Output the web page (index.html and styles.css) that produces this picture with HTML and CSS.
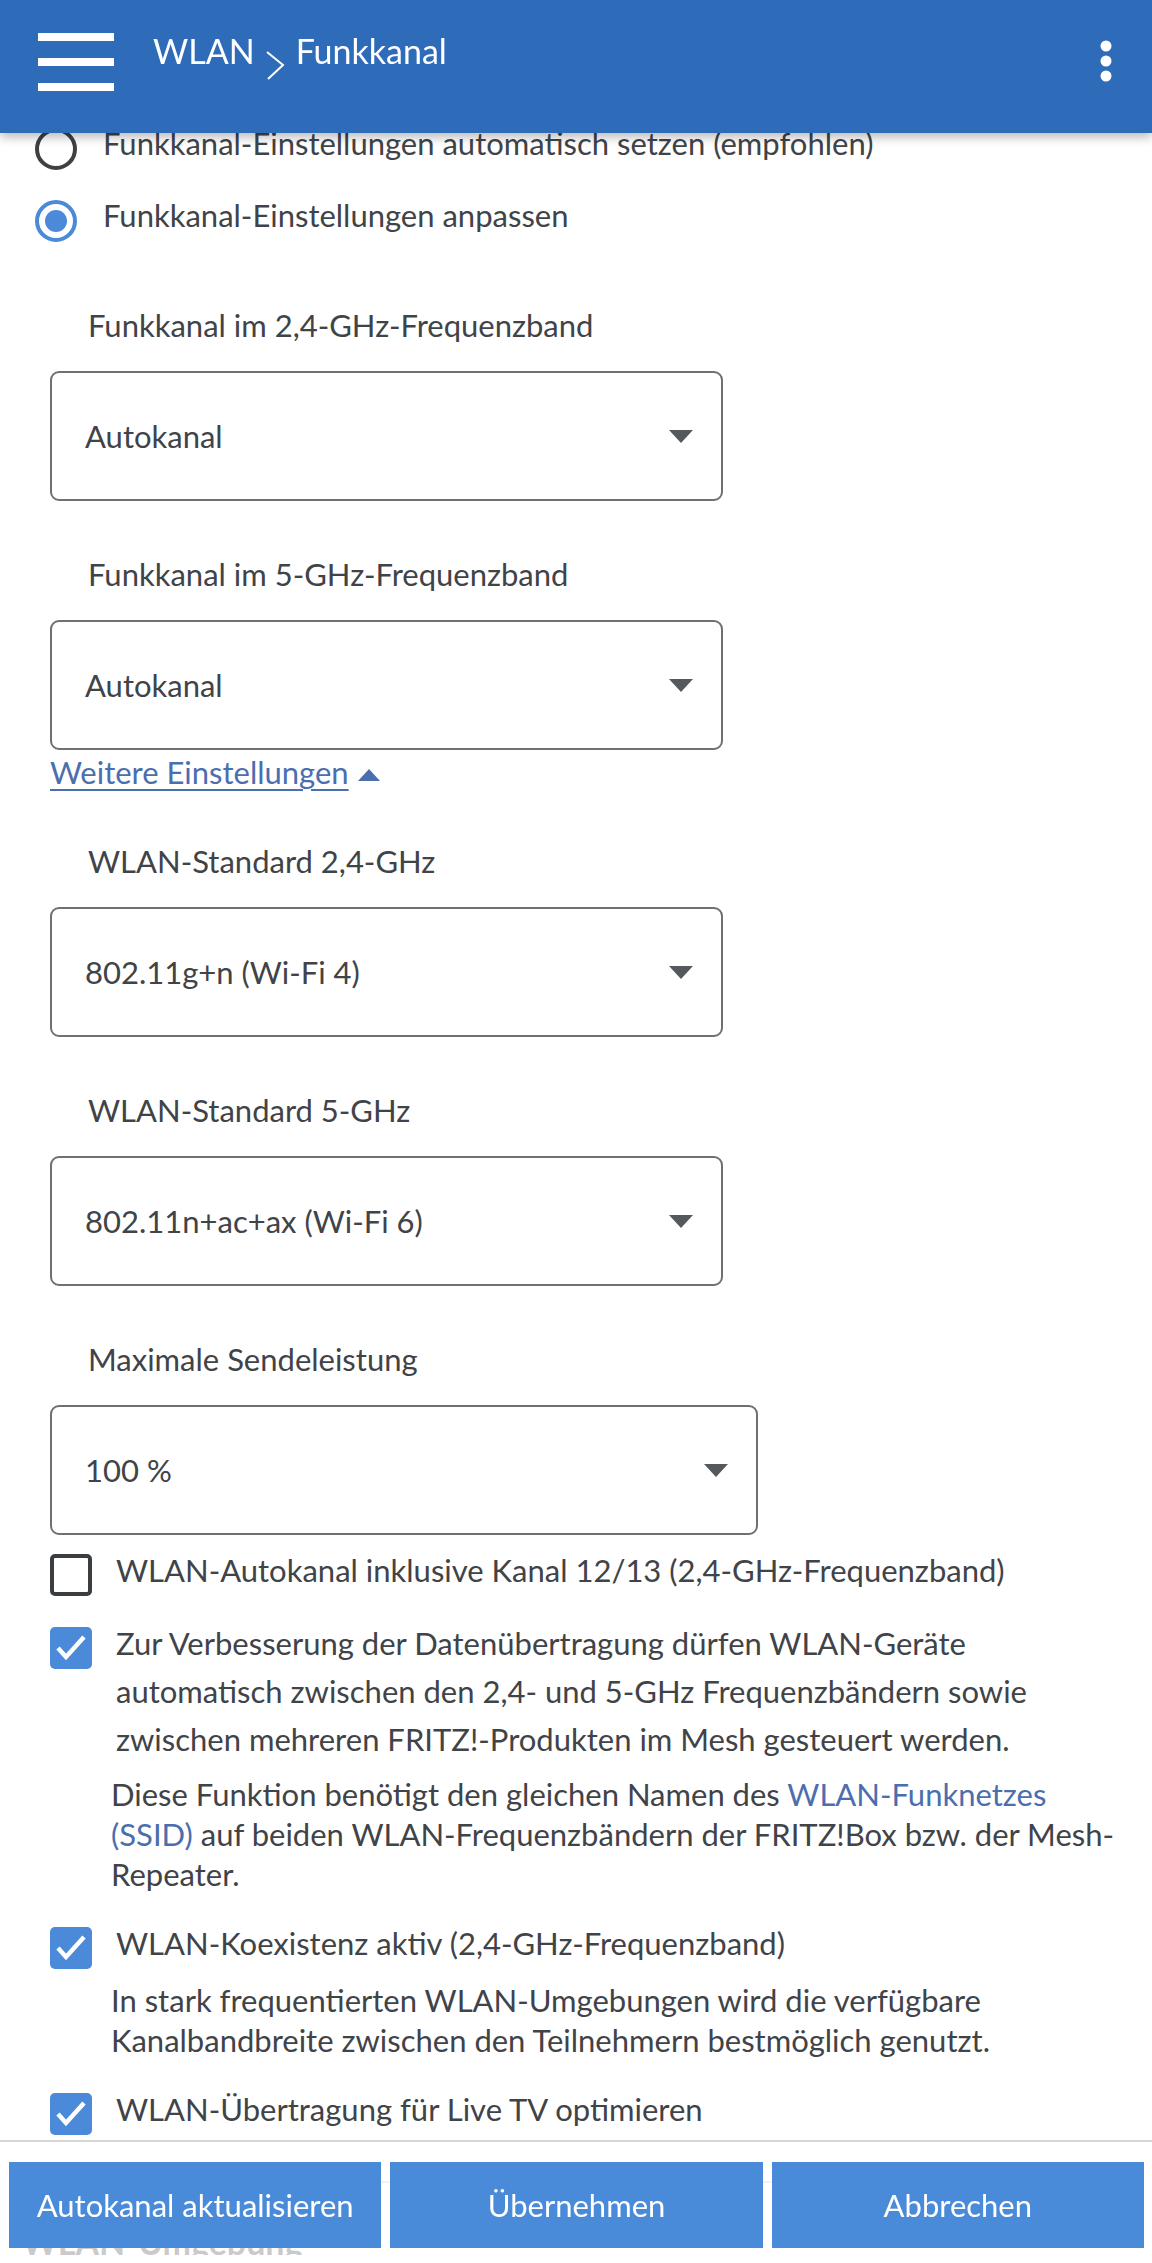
FILE: index.html
```html
<!DOCTYPE html>
<html lang="de">
<head>
  <meta charset="UTF-8">
  <meta name="viewport" content="width=device-width, initial-scale=1">

  <title>WLAN - Funkkanal</title>

  <link rel="stylesheet" href="styles.css">
</head>
<body>

  <header class="topbar">
    <div class="burger"><span></span><span></span><span></span></div>
    <div class="crumbs">
      <span>WLAN</span>
      <svg class="crumb-sep" width="20" height="30" viewBox="0 0 20 30">
        <polyline points="2,1 18,14 3,28" fill="none" stroke="#fff" stroke-width="2"/>
      </svg>
      <span>Funkkanal</span>
    </div>
    <svg class="more" width="12" height="42" viewBox="0 0 12 42">
      <circle cx="6" cy="6" r="5.5" fill="#fff"/>
      <circle cx="6" cy="21" r="5.5" fill="#fff"/>
      <circle cx="6" cy="36" r="5.5" fill="#fff"/>
    </svg>
  </header>

  <main class="content">
    <div class="radios">
      <div class="radio"><span class="radio-dot"></span>Funkkanal-Einstellungen automatisch setzen (empfohlen)</div>
      <div class="radio"><span class="radio-dot on"></span>Funkkanal-Einstellungen anpassen</div>
    </div>

    <div class="field-label">Funkkanal im 2,4-GHz-Frequenzband</div>
    <div class="select">Autokanal</div>

    <div class="field-label">Funkkanal im 5-GHz-Frequenzband</div>
    <div class="select">Autokanal</div>

    <div class="more-link"><a href="#">Weitere Einstellungen</a><span class="up"></span></div>

    <div class="field-label">WLAN-Standard 2,4-GHz</div>
    <div class="select">802.11g+n (Wi-Fi 4)</div>

    <div class="field-label">WLAN-Standard 5-GHz</div>
    <div class="select">802.11n+ac+ax (Wi-Fi 6)</div>

    <div class="field-label">Maximale Sendeleistung</div>
    <div class="select wide">100 %</div>

    <div class="check first"><span class="box"></span>
      <span>WLAN-Autokanal inklusive Kanal 12/13 (2,4-GHz-Frequenzband)</span>
    </div>

    <div class="check"><span class="box on"></span>
      <span>Zur Verbesserung der Datenübertragung dürfen WLAN-Geräte automatisch zwischen den 2,4- und 5-GHz Frequenzbändern sowie zwischen mehreren FRITZ!-Produkten im Mesh gesteuert werden.</span>
    </div>
    <p class="desc">Diese Funktion benötigt den gleichen Namen des <a href="#">WLAN-Funknetzes (SSID)</a> auf beiden WLAN-Frequenzbändern der FRITZ!Box bzw. der Mesh-Repeater.</p>

    <div class="check"><span class="box on"></span>
      <span>WLAN-Koexistenz aktiv (2,4-GHz-Frequenzband)</span>
    </div>
    <p class="desc">In stark frequentierten WLAN-Umgebungen wird die verfügbare Kanalbandbreite zwischen den Teilnehmern bestmöglich genutzt.</p>

    <div class="check"><span class="box on"></span>
      <span>WLAN-Übertragung für Live TV optimieren</span>
    </div>

    <div class="section-rule"></div>
    <h2 class="section-title">WLAN-Umgebung</h2>
  </main>

  <footer class="button-bar">
    <button class="btn">Autokanal aktualisieren</button>
    <button class="btn">Übernehmen</button>
    <button class="btn">Abbrechen</button>
  </footer>

</body>
</html>
```

FILE: styles.css
```css
body {
  margin: 0;
  font-family: Lato, 'Liberation Sans', sans-serif;
  font-size: 31px;
  color: #404347;
  background: #fff;
}

/* top bar */
.topbar {
  position: fixed;
  top: 0;
  left: 0;
  right: 0;
  height: 133px;
  background: #2e6cb9;
  box-shadow: 0 4px 10px rgba(0, 0, 0, 0.28);
  display: flex;
  align-items: flex-start;
  padding: 0 40px 0 38px;
  box-sizing: border-box;
  color: #fff;
  z-index: 2;
}

.burger {
  width: 76px;
  margin-top: 33px;
  display: flex;
  flex-direction: column;
  gap: 17px;
}

.burger span {
  display: block;
  height: 8px;
  background: #fff;
}

.crumbs {
  margin: 31px 0 0 39px;
  font-size: 34px;
  line-height: 40px;
  display: flex;
  align-items: flex-start;
  flex: 1;
}

.crumb-sep {
  margin: 20px 11px 0 10px;
}

.more {
  margin-top: 40px;
}

/* form */
.content {
  padding: 119px 25px 0 50px;
}

.radios {
  margin: 0 0 0 -15px;
}

.radio {
  display: flex;
  align-items: flex-start;
  line-height: 48px;
}

.radio + .radio {
  margin-top: 21px;
}

.radio-dot {
  width: 42px;
  height: 42px;
  box-sizing: border-box;
  border: 4px solid #3e4144;
  border-radius: 50%;
  margin: 9px 26px 0 0;
  flex: none;
  position: relative;
}

.radio-dot.on {
  border-color: #4a8ad8;
}

.radio-dot.on::after {
  content: '';
  position: absolute;
  left: 6px;
  top: 6px;
  width: 22px;
  height: 22px;
  border-radius: 50%;
  background: #4a8ad8;
}

.field-label {
  line-height: 40px;
  padding-left: 38px;
  margin: 53px 0 26px;
}

.radios + .field-label {
  margin-top: 63px;
}

.select {
  width: 673px;
  height: 130px;
  box-sizing: border-box;
  border: 2px solid #6d7075;
  border-radius: 9px;
  padding: 0 28px 0 33px;
  display: flex;
  align-items: center;
  justify-content: space-between;
}

.select::after {
  content: '';
  border-left: 12.5px solid transparent;
  border-right: 12.5px solid transparent;
  border-top: 13px solid #55585c;
}

.select.wide {
  width: 708px;
}

.more-link {
  line-height: 44px;
}

.more-link a,
.desc a {
  color: #4b6eae;
}

.more-link a {
  text-decoration-thickness: 2px;
  text-underline-offset: 5px;
}

.desc a {
  text-decoration: none;
}

.up {
  display: inline-block;
  margin-left: 9px;
  border-left: 11.5px solid transparent;
  border-right: 11.5px solid transparent;
  border-bottom: 12px solid #4b6eae;
  vertical-align: 3px;
}

.more-link + .field-label {
  margin-top: 47px;
}

.check {
  display: flex;
  align-items: flex-start;
  line-height: 48px;
  margin-top: 23px;
  padding-right: 20px;
}

.check.first {
  margin-top: 11px;
}

.desc + .check {
  margin-top: 25px;
}

.box {
  width: 42px;
  height: 42px;
  box-sizing: border-box;
  border: 4px solid #3b3e41;
  border-radius: 5px;
  margin: 8px 24px 0 0;
  flex: none;
}

.box.on {
  border: none;
  background: #4a8ad8 url("data:image/svg+xml,%3Csvg xmlns='http://www.w3.org/2000/svg' width='42' height='42'%3E%3Cpolyline points='8,21 16,30 34,10' fill='none' stroke='%23fff' stroke-width='4.5'/%3E%3C/svg%3E") no-repeat;
}

.desc {
  margin: 11px 0 0;
  padding-left: 61px;
  line-height: 40px;
}

.section-rule {
  margin-top: 46px;
  border-top: 2px solid #d0d0d0;
}

.section-title {
  margin: 46px 0 0 -28px;
  font-size: 34px;
  font-weight: bold;
  line-height: 26px;
}

/* bottom buttons */
.button-bar {
  position: fixed;
  left: 0;
  right: 0;
  bottom: 0;
  height: 123px;
  box-sizing: border-box;
  border-top: 2px solid #d5d5d5;
  background: rgba(255, 255, 255, 0.72);
  display: flex;
  align-items: flex-start;
  gap: 9px;
  padding: 20px 8px 0 9px;
}

.btn {
  flex: 1;
  height: 86px;
  border: none;
  background: #4a8bd9;
  color: #fff;
  font-family: inherit;
  font-size: 31px;
}
```
